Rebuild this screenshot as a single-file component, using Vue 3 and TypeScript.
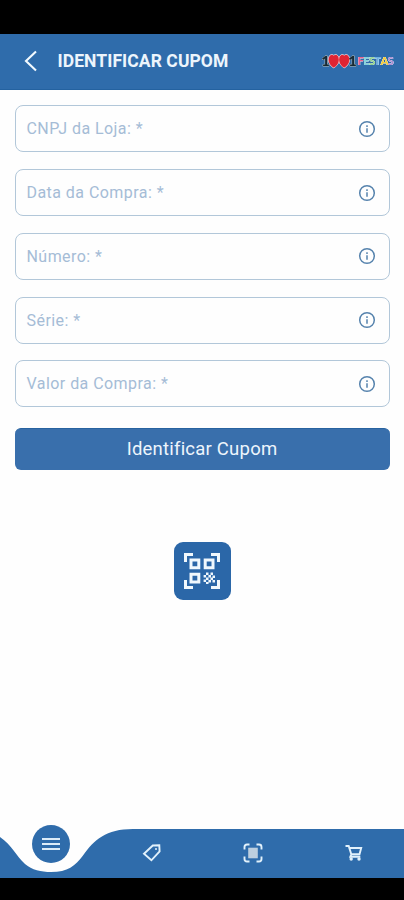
<script setup lang="ts">
const fields: string[] = [
  'CNPJ da Loja: *',
  'Data da Compra: *',
  'Número: *',
  'Série: *',
  'Valor da Compra: *',
]

const festas: { letter: string; color: string }[] = [
  { letter: 'F', color: '#ea5f8c' },
  { letter: 'E', color: '#7fd0d8' },
  { letter: 'S', color: '#8fd08c' },
  { letter: 'T', color: '#6cb0e2' },
  { letter: 'A', color: '#f5cc3a' },
  { letter: 'S', color: '#a88ad0' },
]
</script>

<template>
  <div class="screen">
    <div class="status-bar"></div>
    <header class="header">
      <svg class="back" viewBox="0 0 14 22" aria-hidden="true">
        <path d="M12 1.500 2 11l10 9.500" />
      </svg>
      <h1 class="title">IDENTIFICAR CUPOM</h1>
      <div class="logo">
        <span class="digit">1</span>
        <svg class="hearts" viewBox="0 0 22 16" aria-hidden="true">
          <path d="M5.800 14.800C3 13.300.5 10.500.5 6.500.5 1.500 4.200.8 5.800 2.400 7.400.8 11 1.500 11 6.500c0 4-2.400 6.800-5.200 8.300Z" />
          <path d="M16.200 14.800C13.400 13.300 11 10.500 11 6.500c0-5 3.600-5.700 5.200-4.100 1.600-1.600 5.300-.9 5.300 4.100 0 4-2.500 6.800-5.300 8.300Z" />
        </svg>
        <span class="digit">1</span>
        <span class="festas">
          <span v-for="(f, i) in festas" :key="i" :style="{ color: f.color }">{{ f.letter }}</span>
        </span>
      </div>
    </header>

    <main class="content">
      <form class="form" @submit.prevent>
        <div v-for="label in fields" :key="label" class="field">
          <span class="label">{{ label }}</span>
          <svg class="info" viewBox="0 0 18 18" aria-hidden="true">
            <circle cx="9" cy="9" r="7.300" />
            <path d="M9 8.200v4.500M9 5.200v1.700" />
          </svg>
        </div>
        <button class="submit" type="submit">Identificar Cupom</button>
      </form>

      <button class="qr" type="button" aria-label="QR">
        <svg viewBox="0 0 36 36" aria-hidden="true">
          <path class="frame" d="M1.500 9V1.500H9M27 1.500h7.500V9M34.500 27v7.500H27M9 34.500H1.500V27" />
          <path class="module" d="M7 7h7.800v7.800H7zM21.200 7H29v7.800h-7.800zM7 21.200h7.800V29H7z" />
          <path class="dots" d="M22 19.500h2.500V22H22zM26.500 19.500H29V22h-2.500zM19.600 22h2.500v2.500h-2.500zM24.400 22H27v2.500h-2.600zM28.500 22.500H31V25h-2.500zM22 24.400h2.500V27H22zM26.500 24.400H29V27h-2.500zM19.600 26.500h2.500V29h-2.500zM24.400 27H27v2.500h-2.600zM28.500 27H31v2.500h-2.500zM22 29h2.500v2H22z" />
        </svg>
      </button>
    </main>

    <nav class="nav">
      <svg class="wave" viewBox="0 0 404 49" aria-hidden="true">
        <path d="M0 8C12 16 16 27 25 35C32 41 41 43 51 43C68 43 75 37 83 26.500C94 11 106 0 133 0H404V49H0Z" />
      </svg>
      <div class="tabs">
        <span class="tab">
          <span class="menu">
            <svg viewBox="0 0 18 14" aria-hidden="true"><path d="M0 2h18M0 7h18M0 12h18" /></svg>
          </span>
        </span>
        <span class="tab">
          <svg class="icon" viewBox="0 0 20 20" aria-hidden="true">
            <path d="M10.800 2.500 17.300 2.200 17.600 8.500 9.400 17.300 2 10.800Z" />
            <circle class="solid" cx="14" cy="6" r="1" />
          </svg>
        </span>
        <span class="tab">
          <svg class="icon" viewBox="0 0 20 20" aria-hidden="true">
            <path d="M1.500 6.500V4q0-2.500 2.500-2.500H6.500M13.500 1.500H16q2.500 0 2.500 2.500V6.500M18.500 13.500V16q0 2.500-2.500 2.500H13.500M6.500 18.500H4q-2.500 0-2.500-2.500V13.500" />
            <path class="scan" d="M5.200 4.700h9.600v10.600H5.200z" />
          </svg>
        </span>
        <span class="tab">
          <svg class="icon" viewBox="0 0 20 20" aria-hidden="true">
            <path d="M1.500 3h3.200l2.600 8.300h8.200l1.700-6.300H5.300M7.300 11.300 6.300 13.800h10" />
            <circle class="solid" cx="7.200" cy="16" r="1.700" />
            <circle class="solid" cx="15" cy="16" r="1.700" />
          </svg>
        </span>
      </div>
    </nav>
    <div class="system-bar"></div>
  </div>
</template>

<style>
body {
  background: #fff;
}
</style>

<style scoped>
.screen {
  width: 404px;
  height: 900px;
  display: flex;
  flex-direction: column;
  overflow: hidden;
  background: #fefefe;
  font-family: Roboto, sans-serif;
}
.status-bar {
  flex: 0 0 34px;
  background: #000;
}
.header {
  flex: 0 0 56px;
  box-sizing: border-box;
  display: flex;
  align-items: center;
  padding: 0 11px 2px 24px;
  background: #2f6cab;
  border-bottom: 1px solid #2462a0;
}
.back {
  width: 14px;
  height: 22px;
  fill: none;
  stroke: #f2faff;
  stroke-width: 2.100;
}
.title {
  margin: 0 auto 0 19.500px;
  font-size: 17.500px;
  line-height: 20px;
  font-weight: 700;
  letter-spacing: 0.080px;
  color: #edf5fc;
  white-space: nowrap;
}
.logo {
  display: flex;
  align-items: center;
  height: 18px;
  filter: drop-shadow(0 0 0.600px #e6f0f6) drop-shadow(0 0 0.500px #e6f0f6);
}
.digit {
  font: 900 14px/18px Lato, sans-serif;
  width: 7px;
  text-align: center;
  color: #172b36;
  -webkit-text-stroke: 0.500px #172b36;
}
.hearts {
  width: 22px;
  height: 16px;
  margin: 0 -1px;
  fill: #df2432;
  stroke: #f1a6b0;
  stroke-width: 0.300;
}
.festas {
  margin-left: 2px;
  display: flex;
  font: 900 11.500px/18px Lato, sans-serif;
  letter-spacing: -0.900px;
}
.content {
  flex: 1;
  display: flex;
  flex-direction: column;
  align-items: center;
  padding-top: 15.250px;
}
.form {
  width: 375px;
  display: flex;
  flex-direction: column;
  gap: 16.750px;
}
.field {
  box-sizing: border-box;
  height: 47px;
  display: flex;
  align-items: center;
  justify-content: space-between;
  padding: 0 13px 0 11px;
  border: 1px solid #b2c7d9;
  border-radius: 8px;
}
.label {
  font-size: 16px;
  letter-spacing: 0.450px;
  color: #a5bcd6;
}
.info {
  width: 18px;
  height: 18px;
  fill: none;
  stroke: #5683ad;
  stroke-width: 1.500;
}
.submit {
  height: 42px;
  margin-top: 3.750px;
  padding: 0 0 1px;
  border: 0;
  border-top: 1px solid #2863a0;
  border-radius: 6px;
  background: #396fac;
  color: #edf5fc;
  font: 400 18.500px/38px Roboto, sans-serif;
  letter-spacing: 0.220px;
}
.qr {
  width: 57px;
  height: 58px;
  margin-top: 72px;
  padding: 0;
  display: grid;
  place-items: center;
  border: 0;
  border-radius: 9px;
  background: #2b67a8;
}
.qr svg {
  width: 36px;
  height: 36px;
}
.frame,
.module {
  fill: none;
  stroke: #f0f8fd;
  stroke-width: 3;
}
.dots {
  fill: #f0f8fd;
}
.nav {
  flex: 0 0 49px;
  display: grid;
  grid-template: 49px / 404px;
}
.wave,
.tabs {
  grid-area: 1 / 1;
}
.wave {
  width: 404px;
  height: 49px;
  fill: #2f6cab;
}
.tabs {
  display: grid;
  grid-template: 48px / repeat(4, 101px);
}
.tab {
  display: flex;
  align-items: center;
  justify-content: center;
}
.menu {
  width: 38px;
  height: 38px;
  align-self: flex-start;
  margin-top: -4.500px;
  flex: none;
  display: grid;
  place-items: center;
  border-radius: 50%;
  background: #2f6cab;
}
.menu svg {
  width: 18px;
  height: 14px;
  stroke: #dcecf8;
  stroke-width: 2.200;
}
.icon {
  width: 20px;
  height: 20px;
  fill: none;
  stroke: #e2f1fb;
  stroke-width: 1.900;
}
.icon .solid {
  fill: #e2f1fb;
  stroke: none;
}
.icon .scan {
  fill: #bdcfdf;
  stroke: none;
}
.system-bar {
  flex: 0 0 22px;
  background: #000;
}
</style>
